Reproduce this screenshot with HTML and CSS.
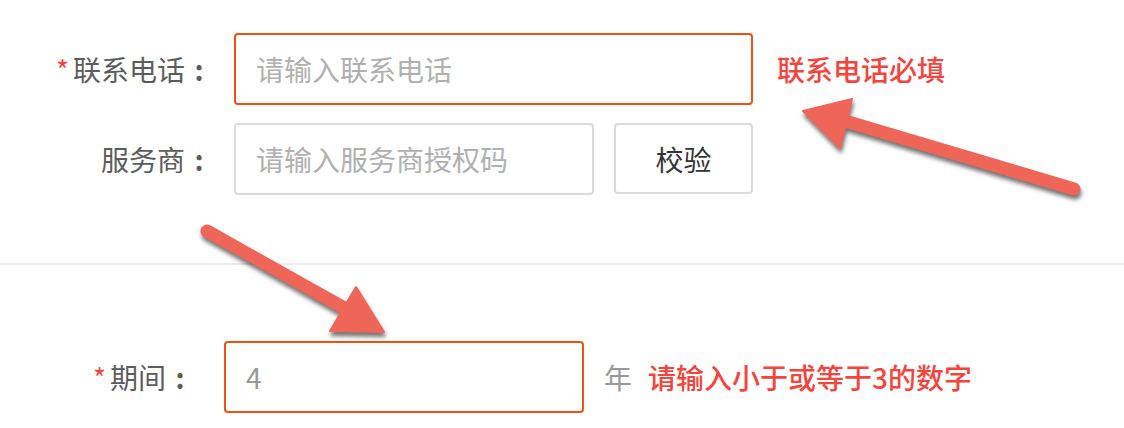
FILE: index.html
```html
<!DOCTYPE html>
<html lang="zh-CN">
<head>
    <meta charset="UTF-8">
    <meta name="viewport" content="width=device-width, initial-scale=1.0">
    <title>表单校验</title>
    <link rel="stylesheet" href="styles.css">
</head>
<body>

<div class="page">
    <div class="form-top">
        <div class="form-row">
            <label class="form-label" for="phone"><span class="required">*</span>联系电话<span class="colon">:</span></label>
            <input class="form-input is-error wide" id="phone" type="text" placeholder="请输入联系电话">
            <span class="tip">联系电话必填</span>
        </div>
        <div class="form-row">
            <label class="form-label" for="code">服务商<span class="colon">:</span></label>
            <input class="form-input" id="code" type="text" placeholder="请输入服务商授权码">
            <button class="btn">校验</button>
        </div>
    </div>

    <div class="divider"></div>

    <div class="form-bottom">
        <div class="form-row">
            <label class="form-label short" for="period"><span class="required">*</span>期间<span class="colon">:</span></label>
            <input class="form-input is-error" id="period" type="text" value="4">
            <span class="unit">年</span>
            <span class="tip">请输入小于或等于3的数字</span>
        </div>
    </div>

    <!-- annotation arrows -->
    <svg class="arrows" width="1124" height="428" viewBox="0 0 1124 428">
        <g class="arrow">
            <line x1="1074" y1="189" x2="845" y2="121" />
            <polygon points="803,111 852,99 840,148" />
        </g>
        <g class="arrow">
            <line x1="207" y1="231" x2="346" y2="309" />
            <polygon points="356,287 330,331 384,332" />
        </g>
    </svg>
</div>

</body>
</html>
```

FILE: styles.css
```css
body {
    margin: 0;
    padding: 0;
    background: #fff;
    font-family: "Noto Sans CJK SC", "Noto Sans", sans-serif;
}
.page {
    position: relative;
    width: 1124px;
    height: 428px;
    overflow: hidden;
}
.form-top {
    padding-top: 33px;
    padding-bottom: 68px;
}
.form-bottom {
    padding-top: 76px;
}
.form-row {
    display: flex;
    align-items: center;
    height: 72px;
}
.form-row + .form-row {
    margin-top: 18px;
}
.form-label {
    width: 213px;
    margin-right: 21px;
    display: flex;
    justify-content: flex-end;
    align-items: center;
    font-size: 28px;
    color: #5c5c5c;
    white-space: nowrap;
}
.form-label.short {
    width: 194px;
    margin-right: 30px;
}
.colon {
    width: 28px;
    text-align: center;
    font-weight: bold;
}
.required {
    color: #f5453d;
    margin-right: 4px;
}
.form-input {
    box-sizing: border-box;
    width: 360px;
    height: 72px;
    padding: 0 20px;
    border: 2px solid #dcdcdc;
    border-radius: 4px;
    font-family: inherit;
    font-size: 28px;
    color: #999;
    outline: none;
}
.form-input::placeholder {
    color: #b0b0b0;
}
.form-input.wide {
    width: 519px;
}
.form-input.is-error {
    border-color: #f2500f;
}
.btn {
    box-sizing: border-box;
    width: 139px;
    height: 71px;
    margin-left: 20px;
    align-self: flex-start;
    background: #fff;
    border: 2px solid #dcdcdc;
    border-radius: 4px;
    font-family: inherit;
    font-size: 28px;
    color: #333;
}
.tip {
    margin-left: 24px;
    font-size: 28px;
    font-weight: 500;
    color: #f5443c;
    white-space: nowrap;
}
.unit {
    margin-left: 20px;
    font-size: 28px;
    color: #999;
}
.unit + .tip {
    margin-left: 16px;
}
.divider {
    height: 2px;
    background: #ececec;
}
.arrows {
    position: absolute;
    top: 0;
    left: 0;
    pointer-events: none;
    filter: drop-shadow(1px 4px 2px rgba(0, 0, 0, 0.55));
}
.arrow line {
    stroke: #ef6558;
    stroke-width: 13;
    stroke-linecap: round;
}
.arrow polygon {
    fill: #ef6558;
    stroke: #ef6558;
    stroke-width: 2;
    stroke-linejoin: round;
}
```
